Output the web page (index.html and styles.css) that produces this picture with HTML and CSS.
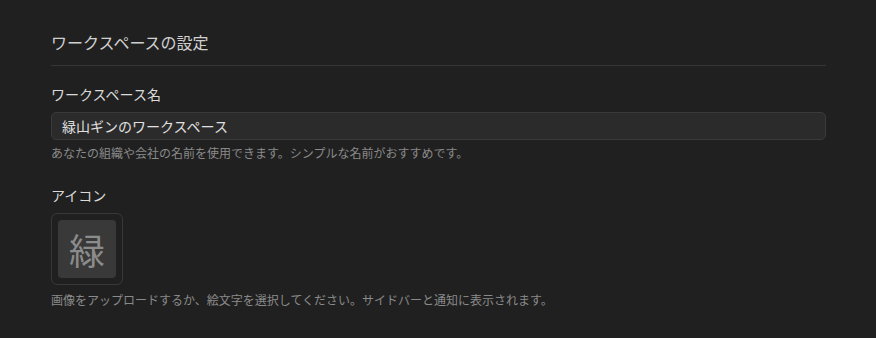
FILE: index.html
```html
<!DOCTYPE html>
<html lang="ja">
<head>
<meta charset="utf-8">
<link rel="stylesheet" href="styles.css">
</head>
<body>
<div class="settings">
  <h2 class="title">ワークスペースの設定</h2>
  <div class="field">
    <label class="label">ワークスペース名</label>
    <div class="input">緑山ギンのワークスペース</div>
    <p class="help">あなたの組織や会社の名前を使用できます。シンプルな名前がおすすめです。</p>
  </div>
  <div class="field icon-field">
    <label class="label">アイコン</label>
    <div class="icon-box"><div class="icon-inner">緑</div></div>
    <p class="help help-bottom">画像をアップロードするか、絵文字を選択してください。サイドバーと通知に表示されます。</p>
  </div>
</div>
</body>
</html>
```
FILE: styles.css
```css
html, body {
  margin: 0;
  padding: 0;
  background: #202020;
  font-family: "Noto Sans CJK JP", "Noto Sans", sans-serif;
  color: #d4d4d4;
}
.settings {
  width: 775px;
  padding: 30px 0 0 51px;
}
.title {
  margin: 0;
  font-size: 16px;
  font-weight: 400;
  line-height: 24px;
  color: #d0d0d0;
  padding-bottom: 11px;
  border-bottom: 1px solid #363636;
}
.field {
  display: flex;
  flex-direction: column;
  align-items: flex-start;
  margin-top: 18px;
}
.label {
  font-size: 14px;
  line-height: 20px;
  color: #dadada;
}
.input {
  box-sizing: border-box;
  margin-top: 8px;
  width: 100%;
  height: 28px;
  padding: 0 10px;
  background: #2b2b2b;
  border: 1px solid #3a3a3a;
  border-radius: 5px;
  font-size: 14px;
  line-height: 26px;
  color: #e0e0e0;
}
.help {
  margin: 4px 0 0;
  font-size: 12px;
  line-height: 18px;
  color: #8a8a8a;
}
.icon-field {
  margin-top: 23px;
}
.icon-box {
  box-sizing: border-box;
  margin-top: 8px;
  width: 72px;
  height: 72px;
  padding: 6px;
  border: 1px solid #383838;
  border-radius: 6px;
}
.icon-inner {
  width: 58px;
  height: 58px;
  background: #393939;
  border-radius: 4px;
  display: flex;
  align-items: center;
  justify-content: center;
  font-size: 36px;
  line-height: 1;
  color: #8c8c8c;
}
.help-bottom {
  margin-top: 6px;
}
```
